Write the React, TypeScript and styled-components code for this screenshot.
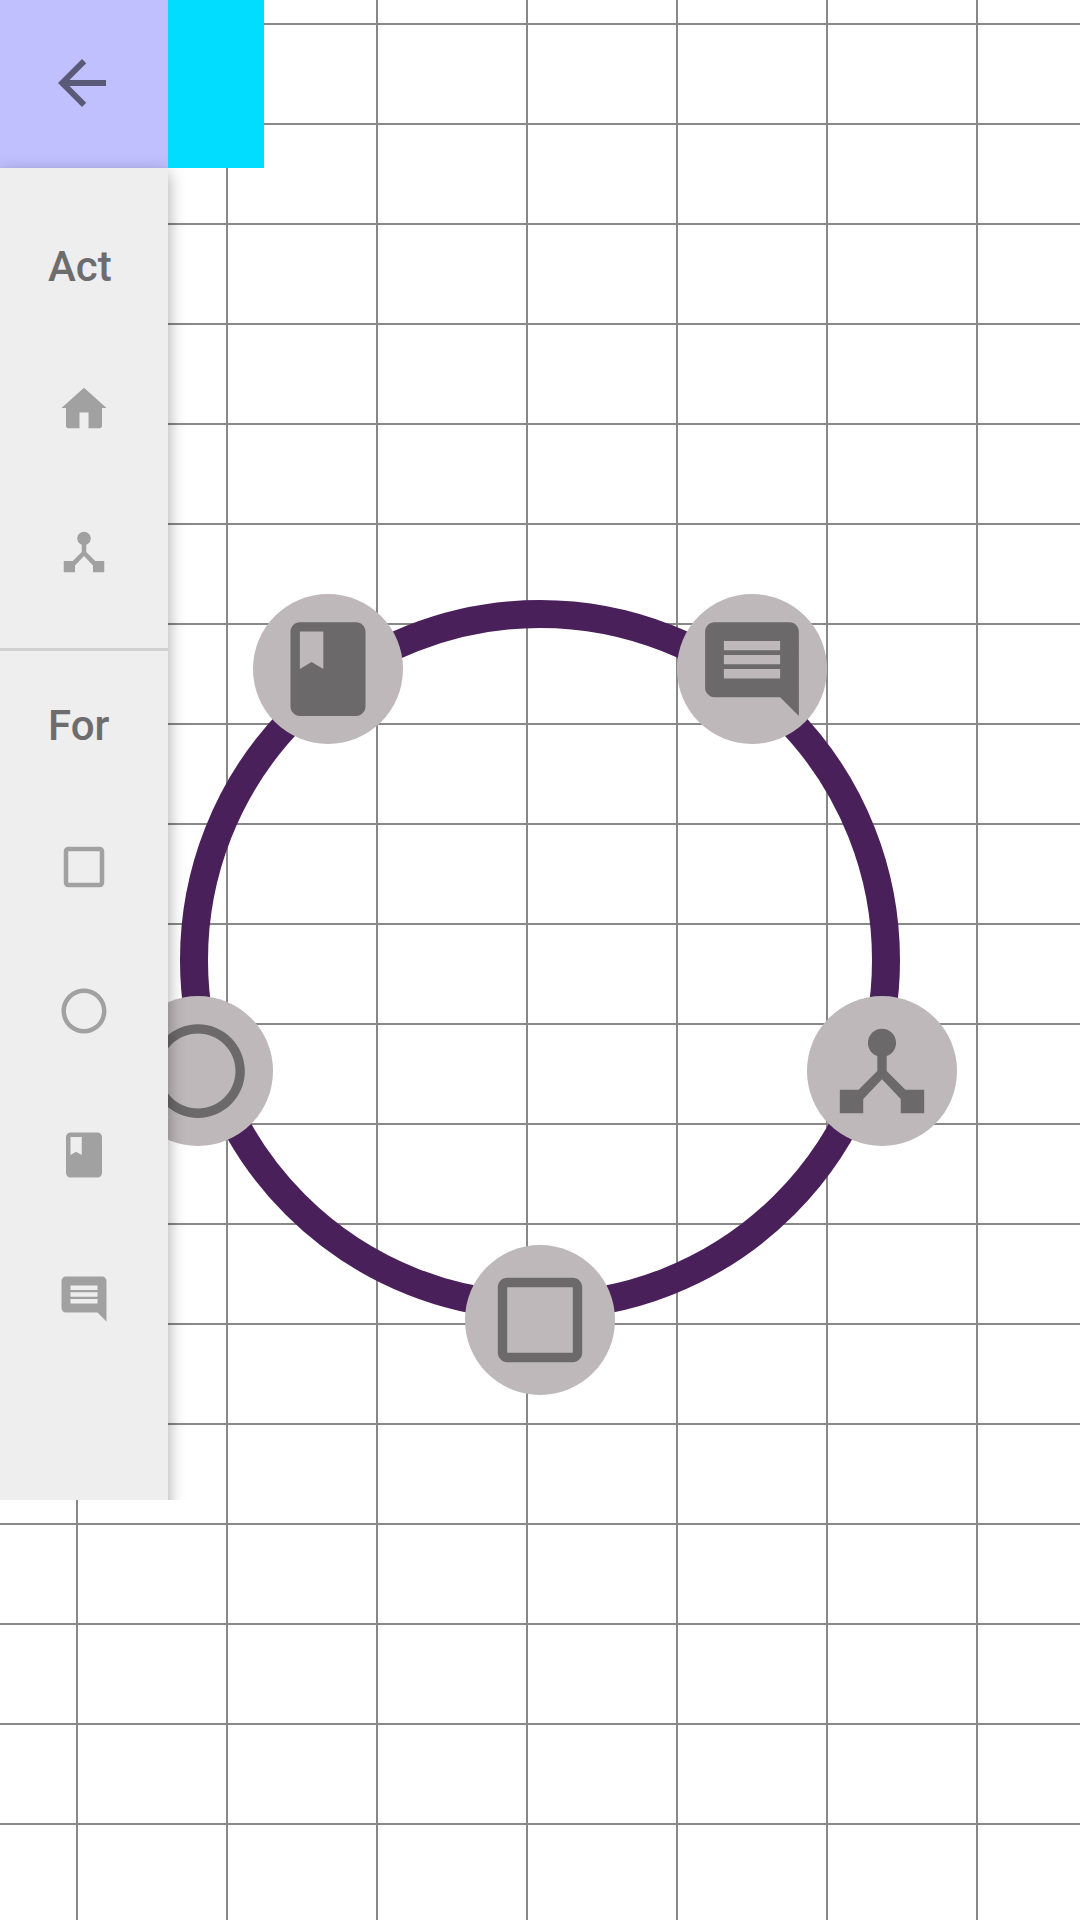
import React from 'react';
import styled, { createGlobalStyle } from 'styled-components';

const GlobalStyle = createGlobalStyle`
  * { box-sizing: border-box; }
  body { margin: 0; background: #fff; }
`;

const Screen = styled.main`
  position: relative;
  width: 1080px;
  height: 1920px;
  overflow: hidden;
  background-color: #fff;
  background-image:
    linear-gradient(#888 2px, transparent 2px),
    linear-gradient(90deg, #888 2px, transparent 2px);
  background-size: 100% 100px, 150px 100%;
  background-position: 0 23px, 76px 0;
  font-family: Roboto, 'Liberation Sans', sans-serif;
`;

const Ring = styled.div`
  position: absolute;
  left: 180px;
  top: 600px;
  width: 720px;
  height: 720px;
  border: 28px solid #4a205a;
  border-radius: 50%;
`;

const Node = styled.button<{ $x: number; $y: number }>`
  position: absolute;
  left: ${(p) => p.$x - 75}px;
  top: ${(p) => p.$y - 75}px;
  width: 150px;
  height: 150px;
  padding: 0;
  border: 0;
  border-radius: 50%;
  background: #beb8ba;
  color: #6b696a;
`;

const Drawer = styled.aside`
  position: absolute;
  left: 0;
  top: 0;
  display: flex;
  flex-direction: column;
  width: 264px;
  height: 1500px;
  overflow: hidden;
`;

const TopBar = styled.header`
  display: flex;
  flex: none;
  height: 168px;
`;

const BackButton = styled.button`
  display: flex;
  width: 168px;
  padding: 47px 0 0 46px;
  border: 0;
  background: #c0c0ff;
  color: #5a5a78;
`;

const Accent = styled.div`
  position: relative;
  z-index: 2;
  flex: 1;
  background: #00ddff;
`;

/* Taller than the drawer, so its shadow runs evenly down to the cut edge. */
const Panel = styled.nav`
  position: relative;
  z-index: 1;
  flex: none;
  width: 168px;
  height: 1400px;
  padding-top: 24px;
  background: #eeeeee;
  box-shadow: 0 5px 16px rgba(0, 0, 0, 0.36);
`;

const Group = styled.section<{ $divided?: boolean }>`
  display: flex;
  flex-direction: column;
  padding-bottom: 24px;
  border-bottom: ${(p) => (p.$divided ? '3px solid #d1d1d1' : '0')};
`;

const Heading = styled.h2`
  height: 144px;
  margin: 0;
  padding-left: 48px;
  font-size: 42px;
  font-weight: 500;
  line-height: 150px;
  color: #6d6d6d;
`;

const Item = styled.button`
  display: flex;
  align-items: center;
  justify-content: center;
  height: 144px;
  padding: 0;
  border: 0;
  background: none;
  color: #a1a1a1;
`;

const Glyph = styled.svg<{ $size: number }>`
  display: block;
  flex: none;
  width: ${(p) => p.$size}px;
  height: ${(p) => p.$size}px;
  fill: currentColor;
`;

const paths = {
  back: 'M20 11H7.83l5.59-5.59L12 4l-8 8 8 8 1.41-1.41L7.83 13H20v-2z',
  home: 'M12 3L2 12h2v8c0 .55.45 1 1 1h5v-7h4v7h5c.55 0 1-.45 1-1v-8h2z',
  hub: 'M17 16l-4-4V8.82C14.16 8.4 15 7.3 15 6c0-1.66-1.34-3-3-3S9 4.34 9 6c0 1.3.84 2.4 2 2.82V12l-4 4H3v5h5v-3.05l4-4.2 4 4.2V21h5v-5h-4z',
  square:
    'M19 5v14H5V5h14m0-2H5c-1.1 0-2 .9-2 2v14c0 1.1.9 2 2 2h14c1.1 0 2-.9 2-2V5c0-1.1-.9-2-2-2z',
  circle:
    'M12 2C6.48 2 2 6.48 2 12s4.48 10 10 10 10-4.48 10-10S17.52 2 12 2zm0 18c-4.42 0-8-3.58-8-8s3.58-8 8-8 8 3.58 8 8-3.58 8-8 8z',
  book: 'M18 2H6c-1.1 0-2 .9-2 2v16c0 1.1.9 2 2 2h12c1.1 0 2-.9 2-2V4c0-1.1-.9-2-2-2zM6 4h5v8l-2.5-1.5L6 12V4z',
  comment:
    'M21.99 4c0-1.1-.89-2-1.99-2H4c-1.1 0-2 .9-2 2v12c0 1.1.9 2 2 2h14l4 4-.01-18zM18 14H6v-2h12v2zm0-3H6V9h12v2zm0-3H6V6h12v2z',
};

type IconName = keyof typeof paths;

/* inset is the empty margin round the 24-unit glyph, in glyph units */
const Icon = ({ name, size, inset = 0 }: { name: IconName; size: number; inset?: number }) => (
  <Glyph
    $size={size}
    viewBox={`${-inset} ${-inset} ${24 + inset * 2} ${24 + inset * 2}`}
    aria-hidden="true"
  >
    <path d={paths[name]} />
  </Glyph>
);

const nodes: { name: IconName; x: number; y: number }[] = [
  { name: 'book', x: 328, y: 669 },
  { name: 'comment', x: 752, y: 669 },
  { name: 'hub', x: 882, y: 1071 },
  { name: 'square', x: 540, y: 1320 },
  { name: 'circle', x: 198, y: 1071 },
];

const groups: { title: string; items: IconName[] }[] = [
  { title: 'Act', items: ['home', 'hub'] },
  { title: 'For', items: ['square', 'circle', 'book', 'comment'] },
];

export default function App() {
  return (
    <>
      <GlobalStyle />
      <Screen>
        <Ring />
        {nodes.map((n) => (
          <Node key={n.name} $x={n.x} $y={n.y} aria-label={n.name}>
            <Icon name={n.name} size={150} inset={4} />
          </Node>
        ))}
        <Drawer>
          <TopBar>
            <BackButton aria-label="back">
              <Icon name="back" size={72} />
            </BackButton>
            <Accent />
          </TopBar>
          <Panel>
            {groups.map((g, i) => (
              <Group key={g.title} $divided={i < groups.length - 1}>
                <Heading>{g.title}</Heading>
                {g.items.map((name) => (
                  <Item key={name} aria-label={name}>
                    <Icon name={name} size={54} />
                  </Item>
                ))}
              </Group>
            ))}
          </Panel>
        </Drawer>
      </Screen>
    </>
  );
}
